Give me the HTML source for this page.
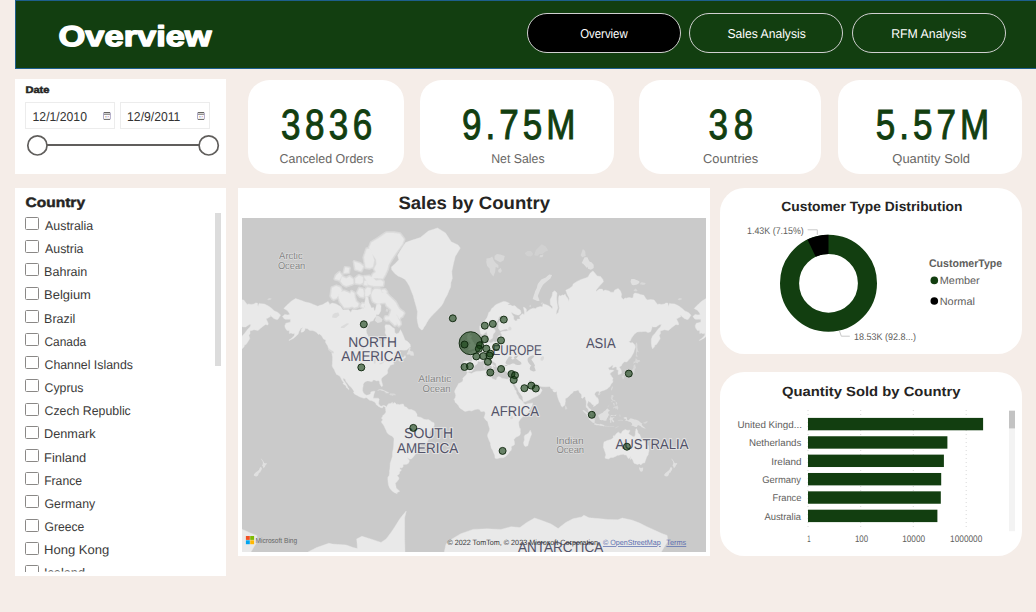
<!DOCTYPE html>
<html lang="en"><head><meta charset="utf-8"><title>Overview</title>
<style>
html,body{margin:0;padding:0}
body{width:1036px;height:612px;background:#F5EDE8;position:relative;overflow:hidden;font-family:"Liberation Sans",sans-serif}
.p{position:absolute;background:#fff}
.hdr{position:absolute;left:15px;top:0;width:1021px;height:69px;background:#123E10;box-sizing:border-box;border:1px solid #1d5f8c;border-right:none}
.pill{position:absolute;top:13px;height:39.5px;width:154px;box-sizing:border-box;border:1px solid #d0d0d0;border-radius:20px}
.inp{position:absolute;top:102px;height:27px;box-sizing:border-box;border:1px solid #ececec;background:#fff}
.cb{position:absolute;left:10px;width:13.6px;height:13.1px;box-sizing:border-box;border:1px solid #8a8886;border-radius:1.5px;background:#fff}
svg{position:absolute;left:0;top:0}
text{font-family:"Liberation Sans",sans-serif;text-rendering:geometricPrecision}
</style></head><body>

<div class="hdr"></div>
<div class="pill" style="left:527px;background:#000"></div>
<div class="pill" style="left:689px"></div>
<div class="pill" style="left:852px"></div>
<div class="p" style="left:15px;top:79px;width:211px;height:95px"></div>
<div class="inp" style="left:25px;width:90px"></div><div class="inp" style="left:120px;width:90px"></div>
<div class="p" style="left:248px;top:79.5px;width:156px;height:94.8px;border-radius:21.5px"></div>
<div class="p" style="left:420px;top:79.5px;width:194px;height:94.8px;border-radius:21.5px"></div>
<div class="p" style="left:639px;top:79.5px;width:182px;height:94.8px;border-radius:21.5px"></div>
<div class="p" style="left:838px;top:79.5px;width:184px;height:94.8px;border-radius:21.5px"></div>
<div class="p" id="country" style="left:15px;top:188px;width:211px;height:388px;overflow:hidden">
<div style="position:absolute;left:200px;top:25px;width:6px;height:153px;background:#dcdcdc"></div>
</div>
<div class="p" style="left:238px;top:188px;width:472px;height:368px"></div>
<div class="p" style="left:720px;top:188px;width:302px;height:166px;border-radius:24.5px"></div>
<div class="p" style="left:720px;top:372px;width:302px;height:184px;border-radius:24.5px"></div>
<div style="position:absolute;left:15px;top:188px;width:211px;height:383.5px;overflow:hidden">
<div class="cb" style="top:28.9px"></div>
<div class="cb" style="top:52.1px"></div>
<div class="cb" style="top:75.3px"></div>
<div class="cb" style="top:98.5px"></div>
<div class="cb" style="top:121.7px"></div>
<div class="cb" style="top:144.9px"></div>
<div class="cb" style="top:168.1px"></div>
<div class="cb" style="top:191.3px"></div>
<div class="cb" style="top:214.5px"></div>
<div class="cb" style="top:237.7px"></div>
<div class="cb" style="top:260.9px"></div>
<div class="cb" style="top:284.1px"></div>
<div class="cb" style="top:307.3px"></div>
<div class="cb" style="top:330.5px"></div>
<div class="cb" style="top:353.7px"></div>
<div class="cb" style="top:376.9px"></div>
</div>
<svg width="1036" height="612" viewBox="0 0 1036 612">
<text transform="translate(58.62 45.70) scale(1.2028 1)" font-size="28.6" font-weight="700" fill="#fff" stroke="#fff" stroke-width="1.4" stroke-linejoin="round">Overview</text>
<text transform="translate(580.19 38.00) scale(0.8902 1)" font-size="12.8" fill="#fff">Overview</text>
<text transform="translate(727.45 38.00) scale(0.9496 1)" font-size="12.8" fill="#fff">Sales Analysis</text>
<text transform="translate(891.22 38.00) scale(0.9613 1)" font-size="12.8" fill="#fff">RFM Analysis</text>
<text transform="translate(25.43 92.70) scale(1.1574 1)" font-size="9.6" font-weight="700" fill="#252423" stroke="#252423" stroke-width="0.5">Date</text>
<text transform="translate(32.58 120.90) scale(0.9478 1)" font-size="12.9" fill="#333">12/1/2010</text>
<text transform="translate(127.09 120.90) scale(0.9448 1)" font-size="12.9" fill="#333">12/9/2011</text>
<g fill="none" stroke-linecap="round"><path d="M104.2 112.5h5.5M103.9 114.2h6.1M104.2 119.4h5.5" stroke="#5f5d5b" stroke-width="0.95"/><path d="M103.5 113.1v5.7M110.4 113.1v5.7" stroke="#a7a1c2" stroke-width="0.9"/></g><rect x="104.9" y="116" width="0.9" height="1.5" fill="#e9b882"/><rect x="106.4" y="116" width="0.9" height="1.5" fill="#8db2ea"/><rect x="107.9" y="116" width="0.9" height="1.2" fill="#e6a6b6"/>
<g fill="none" stroke-linecap="round"><path d="M198.2 112.5h5.5M197.9 114.2h6.1M198.2 119.4h5.5" stroke="#5f5d5b" stroke-width="0.95"/><path d="M197.5 113.1v5.7M204.4 113.1v5.7" stroke="#a7a1c2" stroke-width="0.9"/></g><rect x="198.9" y="116" width="0.9" height="1.5" fill="#e9b882"/><rect x="200.4" y="116" width="0.9" height="1.5" fill="#8db2ea"/><rect x="201.9" y="116" width="0.9" height="1.2" fill="#e6a6b6"/>
<path d="M47 144.9H199" stroke="#605E5C" stroke-width="2" fill="none"/>
<circle cx="37.4" cy="145.4" r="9.6" fill="#fff" stroke="#605E5C" stroke-width="1.7"/>
<circle cx="208.7" cy="145.4" r="9.6" fill="#fff" stroke="#605E5C" stroke-width="1.7"/>
<text transform="translate(280.89 139.40) scale(0.8300 1)" font-size="42.2" letter-spacing="5.44" fill="#123E10" stroke="#123E10" stroke-width="1">3836</text>
<text transform="translate(461.92 139.40) scale(0.8300 1)" font-size="42.2" letter-spacing="4.88" fill="#123E10" stroke="#123E10" stroke-width="1">9.75M</text>
<text transform="translate(708.59 139.40) scale(0.8300 1)" font-size="42.2" letter-spacing="6.91" fill="#123E10" stroke="#123E10" stroke-width="1">38</text>
<text transform="translate(875.70 139.40) scale(0.8300 1)" font-size="42.2" letter-spacing="4.83" fill="#123E10" stroke="#123E10" stroke-width="1">5.57M</text>
<text transform="translate(279.58 163.00) scale(0.9645 1)" font-size="12.9" fill="#696765">Canceled Orders</text>
<text transform="translate(491.21 162.90) scale(0.9552 1)" font-size="12.9" fill="#696765">Net Sales</text>
<text transform="translate(703.06 162.90) scale(0.9979 1)" font-size="12.9" fill="#696765">Countries</text>
<text transform="translate(892.32 162.90) scale(1.0047 1)" font-size="12.9" fill="#696765">Quantity Sold</text>
<text transform="translate(25.48 206.80) scale(1.1427 1)" font-size="13.6" font-weight="700" fill="#252423" stroke="#252423" stroke-width="0.45">Country</text>
<clipPath id="cc"><rect x="15" y="188" width="211" height="383.5"/></clipPath><g clip-path="url(#cc)">
<text transform="translate(45.10 229.95) scale(0.9828 1)" font-size="12.6" fill="#3b3a39">Australia</text>
<text transform="translate(45.10 253.11) scale(0.9792 1)" font-size="12.6" fill="#3b3a39">Austria</text>
<text transform="translate(44.10 276.27) scale(0.9949 1)" font-size="12.6" fill="#3b3a39">Bahrain</text>
<text transform="translate(44.06 299.43) scale(1.0300 1)" font-size="12.6" fill="#3b3a39">Belgium</text>
<text transform="translate(44.10 322.59) scale(0.9874 1)" font-size="12.6" fill="#3b3a39">Brazil</text>
<text transform="translate(44.50 345.75) scale(0.9464 1)" font-size="12.6" fill="#3b3a39">Canada</text>
<text transform="translate(44.48 368.91) scale(0.9798 1)" font-size="12.6" fill="#3b3a39">Channel Islands</text>
<text transform="translate(44.48 392.07) scale(0.9784 1)" font-size="12.6" fill="#3b3a39">Cyprus</text>
<text transform="translate(44.48 415.23) scale(0.9784 1)" font-size="12.6" fill="#3b3a39">Czech Republic</text>
<text transform="translate(44.08 438.39) scale(1.0070 1)" font-size="12.6" fill="#3b3a39">Denmark</text>
<text transform="translate(44.07 461.55) scale(1.0194 1)" font-size="12.6" fill="#3b3a39">Finland</text>
<text transform="translate(44.13 484.71) scale(0.9670 1)" font-size="12.6" fill="#3b3a39">France</text>
<text transform="translate(44.48 507.87) scale(0.9788 1)" font-size="12.6" fill="#3b3a39">Germany</text>
<text transform="translate(44.49 531.03) scale(0.9643 1)" font-size="12.6" fill="#3b3a39">Greece</text>
<text transform="translate(44.06 554.19) scale(1.0353 1)" font-size="12.6" fill="#3b3a39">Hong Kong</text>
<text transform="translate(43.95 577.35) scale(1.0108 1)" font-size="12.6" fill="#3b3a39">Iceland</text>
</g>
<text transform="translate(398.39 208.60) scale(1.0309 1)" font-size="18" font-weight="700" fill="#252423">Sales by Country</text>
<defs><clipPath id="mc"><rect x="242" y="218" width="464" height="334"/></clipPath>
<filter id="soft" x="-5%" y="-5%" width="110%" height="110%"><feGaussianBlur stdDeviation="0.55"/></filter>
<g id="world" filter="url(#soft)"><path d="M403.9 313.3L402.2 316.4L400.5 317.2L399.3 319.3L397.6 315.8L396.5 314.4L398.2 318.5L400.1 321.7L400.5 324.2L398.8 325.9L395.9 321.4L397.1 324.2L394.8 325.2L391.9 322.2L389.1 319.6L386.2 320.1L384.9 318.8L385.6 316.6L389.1 316.6L390.2 313.6L391.4 310.0L389.6 307.9L386.8 305.7L385.6 302.7L383.9 302.7L381.1 303.0L377.7 303.4L375.4 302.7L373.1 301.4L372.0 298.6L371.4 294.9L372.5 291.1L374.8 289.1L377.1 289.1L380.5 289.5L382.2 293.0L385.1 292.6L387.4 294.2L389.6 296.8L392.5 299.3L395.3 302.0L397.1 305.3L398.8 308.5L401.0 310.6L403.3 312.1ZM381.7 289.9L385.1 289.5L386.8 292.2L384.5 293.4L382.2 292.2ZM338.9 297.9L340.1 301.7L342.3 304.7L344.3 307.6L348.6 307.6L352.0 306.6L354.3 307.6L357.7 306.6L358.6 303.7L356.0 301.4L354.9 297.9L354.1 293.0L351.5 291.5L350.3 293.8L348.0 292.6L344.0 291.1L340.1 292.6L338.6 295.3ZM330.9 296.0L332.6 298.6L333.8 299.3L336.6 297.9L339.5 293.8L341.8 290.7L340.3 287.4L336.1 286.1L332.1 287.8L331.5 292.2ZM340.6 281.3L342.9 284.4L346.3 286.1L350.9 284.4L353.2 283.5L353.2 279.4L349.7 276.5L346.3 278.5L341.8 276.5ZM334.9 278.9L339.5 280.3L341.8 275.5L339.5 272.5L336.1 275.5ZM357.1 293.0L360.0 296.4L363.4 297.1L364.0 293.0L362.9 289.1L359.4 288.2ZM365.1 296.0L368.0 296.0L370.8 293.4L370.8 288.2L367.4 287.4L365.1 289.9ZM360.6 306.3L362.9 307.6L365.1 307.3L364.6 304.0L362.3 303.4ZM355.4 283.1L360.0 284.0L362.9 282.6L362.9 277.0L358.9 275.5L355.4 278.5ZM364.0 284.8L367.4 285.3L367.4 281.3L364.6 280.8ZM364.0 276.5L368.6 284.8L373.7 286.1L379.4 286.1L382.8 285.7L383.4 281.7L380.5 279.9L376.0 280.8L372.5 277.5L369.1 276.0ZM371.4 278.0L377.1 278.0L382.8 278.5L385.1 274.5L387.4 269.3L388.5 264.7L390.8 260.5L394.2 255.3L397.6 250.4L402.2 244.3L403.9 239.3L399.9 233.9L394.2 232.9L386.2 232.9L378.2 238.4L371.4 242.6L369.1 248.1L373.1 255.3L376.0 259.2L376.5 264.1L374.2 268.7L376.0 271.9L373.1 274.0ZM365.7 267.6L369.7 268.1L372.8 267.0L374.2 260.5L370.8 248.9L366.8 248.9L364.0 257.3ZM355.4 269.3L361.1 270.9L363.4 266.5L360.0 263.5L354.3 261.7ZM344.0 273.0L348.6 272.5L349.2 268.1L345.2 267.6Z" fill="#e9e9e9" stroke="#e9e9e9" stroke-width="3.2" stroke-linejoin="round" opacity="0.5"/><path d="M282.5 316.4L284.8 314.4L287.6 315.0L289.9 314.4L288.8 312.4L287.0 310.3L283.8 308.5L285.9 306.3L288.2 304.0L291.6 301.0L295.6 298.6L300.7 300.3L305.3 302.0L309.8 303.0L313.3 304.4L317.8 306.3L320.1 305.3L322.4 304.7L325.8 302.7L328.1 301.4L329.8 304.4L332.1 303.0L336.1 304.0L340.6 306.6L342.9 310.0L348.6 309.7L350.9 312.4L352.0 309.7L357.7 310.0L362.3 308.8L364.0 308.5L364.6 303.7L365.7 296.4L368.0 297.5L369.1 303.0L370.3 305.3L371.4 307.9L373.7 307.6L374.2 310.9L375.4 310.0L376.5 304.7L379.4 303.7L381.1 305.7L380.7 310.9L378.8 314.4L376.0 314.7L376.0 316.6L374.2 318.5L373.1 320.7L370.3 321.4L368.6 324.5L366.8 328.1L366.2 330.4L366.6 333.1L368.6 336.9L372.5 337.3L376.0 339.6L378.2 340.4L380.2 340.8L380.3 343.9L381.1 346.4L382.2 348.0L383.6 347.7L384.2 345.6L383.7 342.0L386.2 339.0L386.8 335.9L385.1 333.1L385.5 329.7L384.9 326.2L385.6 324.7L389.6 324.9L392.5 327.4L394.4 328.5L394.8 332.6L396.5 333.9L398.8 333.1L400.5 329.7L402.2 333.1L403.5 336.3L405.0 340.0L407.9 341.8L410.2 344.5L410.5 346.8L409.0 347.9L406.7 349.9L403.9 350.2L401.0 349.9L398.2 350.0L395.9 352.1L394.2 354.5L393.1 355.7L394.8 354.2L397.1 352.3L399.9 351.8L400.7 352.8L398.8 353.9L400.1 355.2L400.4 356.7L401.6 357.4L403.5 357.4L405.0 355.5L405.7 357.2L404.1 358.5L401.6 359.6L399.1 361.2L398.5 359.8L400.2 358.2L398.8 358.5L397.4 359.3L395.3 360.4L393.6 361.5L393.4 363.1L394.2 364.0L392.5 364.5L390.0 365.4L389.5 367.0L388.2 368.6L387.4 370.8L387.7 372.8L386.8 374.2L385.1 375.3L383.6 376.4L381.7 378.1L381.2 380.0L382.1 382.9L382.7 385.7L381.9 386.7L380.7 385.6L379.7 383.4L379.6 381.8L378.2 380.5L376.8 380.9L374.6 380.1L373.1 380.1L372.2 381.6L370.8 381.6L369.1 381.0L367.1 380.9L365.8 381.4L364.0 382.7L363.1 384.4L363.2 385.8L362.6 388.2L362.5 390.4L363.2 392.4L364.4 394.1L366.3 395.3L369.1 394.8L370.6 393.7L370.9 391.9L373.7 391.2L375.0 391.5L374.2 393.4L373.7 395.2L373.3 397.3L373.0 398.2L376.0 398.2L378.2 398.2L379.2 399.1L378.8 401.5L378.6 403.8L379.4 404.9L380.5 406.1L381.7 406.3L383.0 405.5L385.1 405.8L385.9 406.6L385.8 407.4L384.9 406.9L383.4 406.2L382.5 407.0L382.5 407.9L381.1 407.7L379.6 407.0L378.6 406.6L377.3 405.2L376.2 404.7L376.0 403.4L374.2 401.7L373.1 401.2L371.4 400.6L369.7 400.3L368.8 399.6L366.8 397.8L365.5 397.8L364.0 398.3L361.7 397.6L360.1 397.0L357.7 395.7L355.8 394.7L354.3 393.8L353.5 392.6L354.0 391.3L352.7 389.2L350.9 387.0L349.3 385.7L348.0 383.8L347.5 383.1L346.1 381.8L345.2 379.2L343.2 378.1L343.2 379.9L344.6 381.8L345.8 383.6L347.1 385.7L347.9 387.6L349.2 389.2L348.6 389.6L347.9 388.6L346.3 387.5L346.0 385.7L344.0 384.4L342.9 383.4L343.7 382.5L342.1 380.5L341.1 378.5L340.4 377.1L339.0 375.4L336.6 374.5L335.0 371.5L334.4 369.8L332.9 367.6L332.2 366.0L332.4 363.5L332.5 360.4L332.6 356.9L331.8 353.2L333.8 353.3L333.6 351.8L331.7 350.4L328.6 348.6L327.7 345.8L325.5 342.4L325.8 340.0L323.5 339.0L321.8 335.9L319.5 333.9L318.4 334.4L316.7 332.6L314.7 331.3L312.7 330.4L309.8 330.4L307.6 328.8L305.3 328.3L304.7 330.4L303.0 332.0L300.9 332.2L301.5 329.2L303.0 327.6L300.7 328.5L299.0 331.5L298.1 334.2L295.6 336.5L293.3 338.4L291.0 339.6L289.0 340.6L289.3 339.8L291.0 338.8L293.0 336.9L294.3 335.5L294.7 333.3L292.7 333.7L291.0 333.1L289.3 333.5L289.3 330.4L287.0 330.4L285.3 328.1L284.8 325.7L285.9 323.2L288.2 322.7L290.5 321.9L290.5 319.3L288.2 319.3L285.4 319.3L284.2 318.8L282.5 316.4ZM403.9 313.3L402.2 316.4L400.5 317.2L399.3 319.3L397.6 315.8L396.5 314.4L398.2 318.5L400.1 321.7L400.5 324.2L398.8 325.9L395.9 321.4L397.1 324.2L394.8 325.2L391.9 322.2L389.1 319.6L386.2 320.1L384.9 318.8L385.6 316.6L389.1 316.6L390.2 313.6L391.4 310.0L389.6 307.9L386.8 305.7L385.6 302.7L383.9 302.7L381.1 303.0L377.7 303.4L375.4 302.7L373.1 301.4L372.0 298.6L371.4 294.9L372.5 291.1L374.8 289.1L377.1 289.1L380.5 289.5L382.2 293.0L385.1 292.6L387.4 294.2L389.6 296.8L392.5 299.3L395.3 302.0L397.1 305.3L398.8 308.5L401.0 310.6L403.3 312.1ZM381.7 289.9L385.1 289.5L386.8 292.2L384.5 293.4L382.2 292.2ZM338.9 297.9L340.1 301.7L342.3 304.7L344.3 307.6L348.6 307.6L352.0 306.6L354.3 307.6L357.7 306.6L358.6 303.7L356.0 301.4L354.9 297.9L354.1 293.0L351.5 291.5L350.3 293.8L348.0 292.6L344.0 291.1L340.1 292.6L338.6 295.3ZM330.9 296.0L332.6 298.6L333.8 299.3L336.6 297.9L339.5 293.8L341.8 290.7L340.3 287.4L336.1 286.1L332.1 287.8L331.5 292.2ZM340.6 281.3L342.9 284.4L346.3 286.1L350.9 284.4L353.2 283.5L353.2 279.4L349.7 276.5L346.3 278.5L341.8 276.5ZM334.9 278.9L339.5 280.3L341.8 275.5L339.5 272.5L336.1 275.5ZM357.1 293.0L360.0 296.4L363.4 297.1L364.0 293.0L362.9 289.1L359.4 288.2ZM365.1 296.0L368.0 296.0L370.8 293.4L370.8 288.2L367.4 287.4L365.1 289.9ZM360.6 306.3L362.9 307.6L365.1 307.3L364.6 304.0L362.3 303.4ZM355.4 283.1L360.0 284.0L362.9 282.6L362.9 277.0L358.9 275.5L355.4 278.5ZM364.0 284.8L367.4 285.3L367.4 281.3L364.6 280.8ZM364.0 276.5L368.6 284.8L373.7 286.1L379.4 286.1L382.8 285.7L383.4 281.7L380.5 279.9L376.0 280.8L372.5 277.5L369.1 276.0ZM371.4 278.0L377.1 278.0L382.8 278.5L385.1 274.5L387.4 269.3L388.5 264.7L390.8 260.5L394.2 255.3L397.6 250.4L402.2 244.3L403.9 239.3L399.9 233.9L394.2 232.9L386.2 232.9L378.2 238.4L371.4 242.6L369.1 248.1L373.1 255.3L376.0 259.2L376.5 264.1L374.2 268.7L376.0 271.9L373.1 274.0ZM365.7 267.6L369.7 268.1L372.8 267.0L374.2 260.5L370.8 248.9L366.8 248.9L364.0 257.3ZM355.4 269.3L361.1 270.9L363.4 266.5L360.0 263.5L354.3 261.7ZM344.0 273.0L348.6 272.5L349.2 268.1L345.2 267.6ZM421.6 329.9L418.9 327.4L417.7 322.7L417.0 318.0L417.5 311.8L416.4 307.3L415.1 302.7L413.2 295.7L411.3 291.1L409.6 286.6L407.3 282.6L405.1 279.4L401.6 277.5L398.0 276.0L394.8 273.5L391.7 269.8L391.4 267.0L394.8 264.1L398.8 259.8L397.6 255.3L401.0 249.6L405.6 242.6L412.4 240.1L420.4 237.5L428.4 231.0L437.5 228.0L445.5 232.9L451.2 241.8L458.0 245.0L460.3 248.1L455.2 256.6L453.5 263.5L451.8 271.4L452.3 278.5L450.9 282.6L450.6 287.0L448.9 290.7L447.2 294.9L444.9 298.9L443.2 303.0L441.5 305.7L439.2 308.2L435.8 311.8L432.0 315.5L429.0 319.1L426.9 322.4L425.6 324.9L423.8 327.6L422.9 329.5ZM385.9 406.6L386.4 407.3L387.1 405.8L387.9 404.4L388.7 403.7L390.8 403.4L392.3 402.2L392.7 402.9L392.3 404.0L394.0 403.3L394.2 402.4L395.7 403.3L396.5 404.4L397.6 404.2L399.9 404.8L401.0 404.2L403.3 404.1L403.7 405.2L404.7 406.7L406.7 407.3L407.7 408.6L409.0 409.5L411.3 409.5L414.1 410.7L415.3 411.5L417.0 414.3L417.0 416.4L418.7 417.0L420.4 417.2L423.3 418.7L423.8 419.3L426.7 419.7L428.4 419.6L430.1 420.6L431.8 421.9L433.9 422.7L434.3 424.5L434.2 425.5L433.3 427.5L431.8 429.0L430.1 431.3L429.5 433.7L429.5 436.7L428.7 439.1L428.1 440.0L427.3 442.1L426.1 443.4L424.8 443.4L423.0 443.7L421.2 444.6L419.1 446.5L418.6 448.4L418.1 450.6L417.0 452.3L415.9 453.6L414.6 455.2L413.1 457.2L411.3 458.9L409.9 458.9L407.4 457.7L408.8 459.7L409.4 461.0L408.4 463.3L406.7 464.3L403.1 464.6L403.1 467.0L401.3 468.0L399.9 467.4L399.9 469.3L401.5 470.0L399.6 471.9L399.3 474.0L397.1 475.6L398.8 477.6L398.9 478.9L397.1 481.5L395.3 483.3L396.0 486.6L396.1 487.9L399.7 491.2L398.2 492.0L396.5 493.0L397.3 493.8L394.2 492.4L391.9 490.8L389.6 487.9L388.5 485.1L387.9 480.7L387.9 477.3L389.1 475.6L389.6 472.4L389.4 470.8L389.9 468.9L390.0 466.2L390.2 463.3L390.6 461.9L391.4 459.7L392.4 456.3L392.5 453.6L392.6 452.1L393.2 449.0L393.6 446.4L393.7 444.1L394.0 439.9L393.9 437.9L392.6 436.8L391.4 435.7L389.6 434.9L388.3 434.1L387.0 432.5L386.1 430.2L385.1 428.2L384.2 426.1L383.1 424.4L382.1 423.3L381.3 421.8L382.2 420.4L382.9 419.4L381.8 419.0L381.8 417.5L382.7 416.4L382.8 415.5L384.1 414.8L384.2 414.3L385.1 413.4L386.0 412.1L385.6 410.1L385.8 409.0L385.2 408.2L385.8 407.4ZM467.3 372.6L468.0 372.5L470.6 373.3L471.7 373.6L473.3 372.6L475.1 371.8L477.4 371.2L479.7 371.2L482.0 370.9L485.2 370.5L486.5 370.9L486.0 371.8L486.1 372.6L486.5 373.8L485.5 375.3L486.7 376.2L489.0 376.6L491.3 377.3L492.2 378.8L493.9 379.3L495.7 380.1L496.8 379.2L496.8 377.7L498.6 376.6L500.2 377.1L501.4 377.9L502.5 378.4L504.8 378.8L507.1 379.3L508.2 378.8L509.3 378.5L510.5 378.8L510.9 378.9L511.1 380.5L511.2 381.2L511.8 382.7L512.5 384.2L513.3 386.3L514.5 388.2L514.6 389.4L516.1 390.7L516.4 393.6L517.9 395.5L519.0 398.4L520.7 399.7L522.7 401.5L523.4 402.0L523.2 403.1L525.3 404.5L527.6 403.7L529.9 403.4L532.5 402.9L532.4 404.5L531.9 406.1L530.8 407.8L529.3 410.7L528.1 412.4L525.6 414.1L523.6 415.8L522.5 416.9L521.3 418.3L520.2 419.3L519.3 421.0L518.7 422.1L518.8 424.2L519.0 426.1L519.6 427.9L520.3 428.7L520.3 431.3L520.5 433.1L519.9 434.9L518.5 436.0L516.2 437.1L514.8 438.5L513.8 439.4L514.2 440.9L514.5 442.7L514.5 444.6L513.3 445.6L511.6 446.2L511.2 447.1L511.5 448.4L511.1 450.3L509.3 452.1L508.2 454.0L505.9 456.3L503.3 457.7L500.8 457.8L499.1 458.1L496.8 458.8L495.0 458.1L494.9 456.7L494.7 454.9L493.7 452.9L492.8 450.4L491.3 447.9L490.5 444.6L490.5 443.2L489.4 440.9L488.2 437.9L487.5 436.1L487.8 433.9L489.3 430.9L489.7 428.8L489.0 426.5L488.0 423.4L487.9 422.1L487.5 421.6L486.5 420.7L485.2 419.3L484.0 417.2L484.7 415.9L484.9 415.0L485.2 413.8L485.1 412.8L484.8 411.8L483.7 411.2L482.0 411.4L480.8 411.5L479.9 410.1L479.0 409.2L477.9 409.1L476.7 409.2L475.4 409.4L473.8 410.1L471.6 411.0L469.4 410.5L467.2 410.9L465.2 411.4L463.7 410.7L461.7 409.2L459.8 407.9L459.0 406.7L458.4 405.5L456.9 403.8L455.8 402.7L455.0 402.2L455.0 400.9L454.1 399.5L455.2 397.9L455.8 395.4L455.4 393.7L454.6 392.1L454.8 390.7L455.9 388.6L457.5 385.7L458.6 383.5L459.3 383.3L461.3 382.2L462.6 381.2L463.1 380.0L462.8 378.5L463.5 377.5L465.3 375.7L466.2 375.1L466.9 373.5ZM530.2 430.2L531.2 432.5L531.6 434.3L530.5 436.7L529.9 438.5L528.7 442.1L527.8 445.7L525.5 446.5L524.2 445.6L523.5 442.7L524.5 439.7L524.2 436.7L525.1 435.1L526.4 434.6L528.1 433.5L529.3 431.9ZM467.8 372.2L466.8 371.7L466.0 370.7L463.7 370.9L464.0 369.5L463.2 368.5L463.9 366.6L464.1 364.8L463.4 362.0L464.4 361.4L466.0 360.9L467.5 361.1L469.7 361.2L470.6 361.4L471.9 361.4L472.5 359.3L472.7 357.9L472.6 356.9L471.5 355.5L470.6 354.5L469.0 354.2L468.5 353.2L470.0 352.5L471.7 352.8L472.2 352.7L471.9 350.9L472.6 351.3L474.1 351.3L475.1 350.6L475.8 349.1L476.2 348.6L477.3 348.0L478.0 347.7L478.6 346.8L479.4 344.9L480.3 344.3L482.0 343.9L483.1 343.7L484.1 343.0L483.9 341.4L483.3 340.0L483.2 338.0L483.8 336.7L486.1 335.5L486.0 336.9L485.7 338.8L485.2 340.0L484.8 341.0L485.3 341.4L485.6 342.2L486.4 343.0L487.7 342.6L489.4 341.8L490.3 343.2L492.2 342.4L493.4 341.4L495.2 342.2L496.3 342.2L496.8 341.2L497.9 340.4L498.1 339.6L497.9 337.3L498.5 335.9L499.8 335.5L500.4 336.9L501.5 336.9L501.8 334.2L500.8 333.3L500.8 332.2L502.2 331.5L503.6 331.3L505.9 331.3L508.4 330.6L506.7 329.0L504.8 329.2L502.5 329.9L500.2 330.8L499.1 329.5L498.3 328.1L498.5 325.7L498.3 323.0L500.2 320.7L503.0 318.0L501.9 315.8L499.3 316.4L498.5 318.0L497.9 320.1L497.1 321.4L495.3 323.2L494.3 324.9L493.7 326.9L493.6 328.8L495.1 329.7L495.2 332.0L493.9 333.3L493.0 334.8L492.8 336.9L492.6 337.8L492.0 338.8L490.5 339.0L490.2 340.2L488.8 340.2L488.6 339.0L488.2 337.6L487.6 335.5L486.8 332.8L486.2 331.1L485.7 332.6L484.8 333.1L483.1 334.6L482.0 334.8L480.5 333.3L480.4 332.6L479.8 329.5L479.7 326.9L480.0 325.4L481.1 324.5L482.6 322.7L484.3 321.4L485.4 320.1L486.9 318.0L488.0 315.3L488.8 312.4L490.3 311.5L491.7 308.5L493.4 307.3L495.4 305.0L497.9 303.7L501.0 302.4L503.4 301.4L505.9 301.7L508.2 302.7L509.5 303.4L507.6 304.4L508.8 305.0L510.5 305.0L512.2 306.0L515.0 305.7L517.3 308.2L520.2 310.0L521.1 312.4L520.7 313.8L519.0 315.0L517.3 315.0L513.9 313.8L511.1 312.1L512.2 314.4L513.7 316.6L513.7 319.3L515.6 320.9L517.1 320.7L517.3 319.1L519.6 319.1L520.2 319.1L519.6 316.6L521.3 314.7L522.5 313.8L524.2 314.7L524.5 312.4L523.9 309.4L523.4 307.3L525.3 307.9L526.4 309.4L526.4 312.4L528.7 310.6L529.9 309.4L533.3 308.2L535.6 308.8L536.7 307.6L540.1 306.6L542.4 306.9L543.0 303.7L547.5 305.3L550.4 306.9L552.1 308.8L552.7 306.9L550.4 304.4L550.2 299.6L552.1 296.0L552.7 292.2L554.9 291.1L557.0 293.0L556.6 297.9L557.0 303.0L557.8 307.9L556.6 310.9L556.1 314.4L558.4 312.4L559.3 307.9L558.4 303.0L558.7 296.8L559.5 295.3L560.6 296.0L562.4 294.9L563.5 295.3L565.2 294.2L565.8 296.0L567.5 297.9L569.0 301.4L569.2 297.9L567.5 294.9L565.8 290.3L569.8 288.2L572.6 286.1L573.2 284.0L576.6 281.7L581.2 279.4L585.7 278.0L588.0 277.0L590.3 273.0L592.9 270.9L594.8 273.0L597.1 276.0L600.5 276.5L602.8 279.4L603.4 281.7L599.4 286.1L596.0 290.3L596.0 291.5L599.4 289.1L602.2 289.1L603.4 291.1L605.1 289.9L609.1 291.1L610.8 292.2L613.6 292.2L614.8 289.9L618.2 288.6L620.5 291.1L621.6 294.2L621.1 297.1L623.3 299.6L625.0 297.9L626.2 298.2L629.0 297.5L631.3 297.9L633.0 297.9L633.6 294.2L634.7 293.0L637.6 293.4L640.4 294.5L643.9 295.3L645.6 298.2L647.3 300.0L650.7 299.6L654.1 300.0L656.4 303.0L657.5 304.4L659.2 304.0L661.5 304.4L664.4 304.0L665.9 303.0L667.8 303.0L668.4 306.6L669.5 303.4L671.2 303.7L674.6 304.0L676.9 305.0L679.2 306.3L681.5 307.9L684.9 310.9L688.3 312.4L690.6 314.7L690.9 315.3L688.3 319.3L687.0 319.6L684.3 318.5L682.0 316.6L680.3 314.7L680.9 316.6L676.9 318.8L676.4 318.8L678.6 323.2L678.4 324.9L675.8 324.5L673.5 326.2L671.2 328.1L668.4 330.4L664.4 329.7L662.1 330.4L660.4 330.8L660.4 333.7L659.2 335.2L660.2 338.6L658.7 341.0L658.1 342.0L656.4 344.5L654.9 344.9L654.5 346.8L652.6 348.8L651.8 346.8L651.3 343.0L651.4 339.0L652.6 335.9L654.7 333.7L656.4 331.5L658.1 329.2L660.4 326.9L661.5 324.5L659.8 324.5L657.0 326.2L656.4 326.9L653.0 326.9L652.4 326.2L650.7 331.7L647.9 332.6L645.9 331.5L643.9 331.5L641.6 331.7L639.9 331.7L637.2 332.0L634.7 333.7L633.0 335.9L631.5 338.0L630.2 341.0L628.5 341.6L630.8 343.0L632.5 342.6L634.4 344.5L635.1 345.8L635.2 347.7L634.2 350.4L633.9 352.1L632.5 354.7L630.8 357.5L629.0 359.6L626.8 362.0L624.5 361.8L623.3 362.8L623.0 363.1L621.9 364.5L621.6 365.5L619.9 366.6L619.4 367.6L620.4 368.8L621.3 370.5L621.6 372.4L621.4 373.3L621.1 373.6L619.6 374.2L618.1 374.6L618.1 373.1L618.2 371.4L618.3 370.1L617.1 369.8L616.5 369.2L616.8 368.3L616.7 367.3L615.8 366.7L614.2 367.2L612.6 368.2L612.5 367.0L613.3 365.8L612.2 365.2L610.6 366.7L608.5 367.8L608.3 368.2L609.1 369.5L609.7 370.5L609.9 369.9L611.4 370.1L612.4 370.1L613.8 370.4L613.5 371.1L611.3 372.2L610.0 373.8L610.0 374.2L611.1 375.4L611.8 377.1L612.9 378.0L613.0 379.2L611.9 380.1L613.1 380.7L612.6 382.5L611.9 383.1L610.8 384.7L610.3 385.7L609.7 386.7L608.6 387.6L607.4 388.8L607.0 389.1L605.1 389.8L604.2 390.3L603.4 390.4L601.7 391.0L600.0 391.7L599.7 392.8L599.2 392.8L599.2 391.4L598.3 391.3L597.1 391.2L595.8 392.1L594.8 393.4L594.5 394.3L595.4 395.8L596.5 397.2L597.5 397.8L598.3 399.3L598.6 401.5L598.5 402.9L597.5 403.9L596.0 404.5L595.5 405.5L593.5 406.6L593.7 405.2L593.1 404.5L592.1 404.4L591.4 403.5L590.9 402.6L589.1 401.8L588.7 400.9L588.0 401.1L588.0 402.6L587.2 403.8L587.1 405.2L587.4 405.9L588.2 406.8L588.7 408.2L589.7 408.6L590.6 409.3L591.6 410.3L592.0 411.5L591.9 412.1L592.1 413.3L592.8 414.3L592.6 414.9L592.0 414.9L590.9 414.0L589.5 413.1L588.8 411.8L588.3 410.2L588.2 409.1L587.5 408.4L586.6 407.3L586.1 407.4L586.1 406.1L586.4 404.9L586.3 403.2L586.4 402.0L585.9 400.3L585.4 398.7L585.3 397.3L584.4 396.7L583.7 397.3L582.6 398.3L581.5 397.9L581.7 396.1L581.5 394.6L580.7 393.4L579.9 393.0L579.2 392.1L578.7 390.3L577.2 390.3L575.5 390.9L574.3 391.0L573.2 391.4L573.0 392.3L572.5 393.1L571.8 393.4L570.9 394.0L569.8 395.2L569.0 395.9L567.8 397.2L566.6 398.0L565.4 398.5L565.3 400.3L565.5 401.3L565.1 402.6L565.0 404.6L564.1 405.8L563.1 406.2L562.4 407.1L561.2 406.1L560.9 404.9L560.3 403.2L559.3 401.6L558.6 399.7L558.1 398.5L557.6 396.7L557.0 394.3L556.9 392.5L557.0 391.7L556.6 390.7L556.3 391.9L554.9 392.1L553.8 391.9L552.7 390.4L554.1 389.6L552.7 389.6L552.1 388.8L551.0 388.5L550.3 387.2L549.8 386.4L547.5 386.7L544.7 386.8L544.1 386.8L541.3 386.4L539.5 386.1L539.0 384.7L538.2 384.2L536.1 384.9L534.4 384.4L532.7 383.3L531.9 382.0L531.2 380.5L529.9 380.0L529.3 380.5L528.7 381.3L529.3 382.5L529.9 383.8L531.0 384.8L531.2 385.2L531.3 386.3L531.9 387.2L532.1 385.6L532.5 385.6L532.8 387.0L532.7 387.6L533.9 388.0L536.0 387.6L537.0 386.6L538.0 385.6L538.3 385.2L538.3 387.0L538.5 387.6L540.8 388.7L542.2 390.1L541.0 392.3L539.9 394.3L539.0 394.6L537.8 395.7L535.6 396.7L533.5 397.7L531.0 399.1L529.9 399.7L527.6 400.7L525.3 401.7L523.6 401.8L523.2 401.1L522.8 399.3L522.7 397.3L522.5 396.7L521.3 394.9L520.2 393.4L519.0 391.9L518.6 391.3L517.9 389.4L517.3 388.1L516.4 387.0L515.6 385.7L514.5 383.8L513.7 383.1L513.9 381.2L513.1 383.5L511.8 382.1L511.2 380.7L510.9 378.9L513.0 378.8L513.7 377.7L513.9 376.8L514.5 375.3L514.8 374.5L514.8 373.1L515.3 371.5L514.5 371.5L513.4 371.2L512.4 372.1L511.4 372.4L509.0 371.1L508.8 371.9L507.3 371.9L506.1 371.2L505.1 370.9L505.0 369.9L504.6 368.9L504.2 367.6L503.9 366.6L503.6 365.7L503.5 365.4L501.8 365.2L501.4 366.4L500.8 366.6L500.1 365.8L499.8 366.6L500.2 367.6L500.8 368.3L501.4 369.9L500.8 369.6L500.2 369.6L500.4 370.5L500.2 371.7L499.6 371.7L498.7 371.2L498.3 369.9L498.7 369.2L497.9 369.1L497.7 368.0L497.0 367.3L496.2 366.1L496.1 364.6L496.1 363.7L495.3 363.1L494.6 362.6L492.7 361.2L491.3 360.3L491.0 358.8L490.4 358.3L489.8 359.2L489.5 358.0L489.7 357.9L488.0 358.2L488.2 359.0L488.4 360.4L489.4 361.1L490.2 362.8L492.5 363.7L492.2 364.5L493.3 364.9L494.5 365.7L495.1 366.4L495.0 366.9L493.6 365.8L492.9 366.6L492.9 367.0L493.5 368.0L492.8 368.9L492.2 369.6L491.8 369.4L492.1 368.5L492.4 367.3L491.8 366.6L490.9 365.7L490.2 365.4L489.4 364.8L487.9 363.9L487.5 363.4L486.5 362.8L486.0 362.0L485.7 361.2L485.2 360.3L484.1 359.8L483.3 360.4L482.3 360.9L480.8 361.8L480.2 361.5L479.2 361.4L478.4 361.2L477.5 362.0L477.5 362.8L477.8 363.1L476.5 364.5L475.4 364.9L474.9 365.5L473.7 367.3L474.2 368.5L473.4 369.1L473.0 370.1L471.5 371.4L469.0 371.4ZM467.5 350.2L468.9 349.9L469.9 350.0L471.7 349.3L472.9 349.1L474.2 349.1L475.6 348.4L475.6 347.9L474.8 347.7L475.5 347.1L475.9 345.6L475.5 345.1L474.3 345.1L474.3 343.9L474.0 343.7L473.9 342.8L472.6 341.8L472.4 341.0L472.2 339.8L471.5 339.2L470.4 339.0L471.0 338.4L470.8 338.0L471.7 336.7L471.9 335.7L470.0 335.5L469.2 335.9L469.4 335.0L470.5 333.5L468.3 333.5L468.0 334.8L467.4 335.9L467.5 337.3L466.9 337.6L467.6 338.6L467.5 340.4L468.3 339.4L468.5 339.8L468.2 341.2L468.4 341.6L470.0 341.2L469.9 342.0L470.4 342.8L470.7 343.4L470.5 344.1L469.1 344.1L468.8 344.3L468.6 345.3L469.3 345.8L468.6 346.6L468.0 346.9L468.2 347.5L469.4 347.5L470.4 347.9L470.9 347.5L470.5 348.2L469.2 348.2L468.9 348.6L468.2 349.7ZM636.5 428.7L637.6 430.8L637.9 432.9L639.6 434.3L640.2 436.0L641.4 438.7L643.3 439.9L644.1 441.0L645.9 443.1L647.1 444.6L647.9 445.6L648.6 445.8L648.6 448.9L649.1 450.6L648.4 452.9L648.2 454.7L647.1 456.2L646.5 457.5L645.9 459.3L645.0 461.6L645.0 462.6L642.7 463.2L641.6 464.0L640.9 464.9L639.3 463.7L637.6 464.5L635.3 463.7L634.2 463.3L633.3 461.6L632.8 460.0L631.9 459.0L631.3 457.9L630.8 459.3L630.1 459.3L631.1 455.7L630.2 457.2L629.0 458.5L628.1 458.3L627.0 456.3L626.4 455.1L624.5 454.9L623.3 454.3L621.1 454.5L618.8 455.2L617.6 455.3L615.9 456.3L613.0 457.5L610.8 457.5L608.4 459.0L605.2 458.2L605.1 457.0L605.9 454.9L605.4 452.9L604.6 450.7L604.1 449.0L603.4 447.4L603.5 445.7L603.7 443.4L604.1 441.9L605.2 441.6L607.2 440.5L609.2 440.0L610.8 439.6L612.5 438.5L613.3 437.3L613.3 436.1L614.1 435.4L614.9 436.5L615.1 435.2L615.9 434.3L616.8 433.2L617.9 432.5L618.7 432.2L619.7 433.1L620.1 433.7L621.1 433.6L621.7 432.5L622.4 431.2L623.1 430.6L623.9 430.4L625.2 429.5L626.2 429.9L627.9 430.4L629.8 430.2L629.6 431.6L628.9 432.8L628.4 433.7L630.0 434.8L631.3 435.6L633.0 436.7L634.5 436.7L635.2 434.9L635.4 433.1L635.4 431.3L635.7 430.9L635.9 429.0ZM444.3 560.0L444.3 552.0L446.0 544.1L452.1 538.9L460.8 533.7L473.0 529.4L486.9 528.8L500.8 529.4L511.2 526.7L519.9 527.6L526.8 522.4L534.6 518.1L542.5 520.7L551.1 524.1L558.1 528.5L565.8 522.4L573.0 518.8L581.7 516.9L583.9 515.2L589.0 517.8L600.5 518.8L607.8 519.5L617.9 519.8L622.3 518.1L632.4 520.2L639.6 523.1L646.9 526.7L654.1 529.9L661.3 533.3L667.1 535.4L667.9 541.2L664.2 547.0L661.3 552.0L661.0 560.0ZM308.0 560.0L308.0 552.0L316.7 547.6L328.9 543.3L332.3 544.1L346.2 545.0L353.2 547.6L357.5 548.5L356.7 538.9L361.9 536.3L370.6 538.9L381.0 542.4L386.2 538.9L391.4 532.0L394.9 526.7L399.2 519.8L401.8 516.3L406.2 511.1L404.6 518.1L404.6 526.7L404.6 537.2L405.0 552.0L405.0 560.0Z" fill="#e9e9e9" stroke="#e9e9e9" stroke-width="0.4" stroke-linejoin="round"/><path d="M374.8 320.7L377.7 323.0L381.7 321.9L382.5 319.3L379.4 316.4L376.5 315.3ZM447.9 317.0L449.5 315.1L451.2 316.8L452.8 315.8L454.8 314.9L456.1 316.0L456.9 318.0L455.6 319.6L452.8 321.2L450.7 320.4L449.4 320.4L449.9 319.0L448.4 318.2L449.9 317.4ZM406.4 354.5L407.4 352.8L408.2 350.4L409.2 348.0L410.7 347.5L410.0 350.4L411.3 351.3L413.0 351.6L413.6 353.0L413.9 354.7L413.4 356.0L412.4 355.5L410.7 355.7L410.2 354.5L407.9 354.5ZM377.1 390.8L378.2 389.8L380.1 389.2L382.2 389.4L383.9 390.2L385.6 390.9L387.4 391.7L389.4 392.9L387.9 393.2L385.4 393.2L386.1 392.4L384.7 392.3L384.5 391.3L382.8 390.9L381.1 390.6L379.9 389.9L378.8 390.4ZM466.7 346.4L466.9 344.9L467.0 344.3L466.9 343.0L467.7 342.2L467.5 341.6L467.0 340.6L465.6 340.2L464.5 340.8L464.3 341.8L464.7 342.0L462.6 342.6L462.6 343.9L463.7 344.5L463.2 345.1L462.7 345.6L462.1 346.6L462.4 347.3L462.8 347.9L464.5 347.1L466.0 346.6ZM532.7 298.9L533.6 296.0L534.4 293.8L535.2 291.1L536.7 288.2L537.8 284.0L539.5 281.7L541.3 279.4L545.8 277.5L549.2 274.5L552.1 275.0L550.4 278.5L545.8 282.2L543.0 284.8L541.3 287.8L540.1 290.3L538.8 293.4L537.8 296.0L539.0 298.9L539.5 301.0L537.3 301.0L535.0 300.0ZM581.7 262.9L584.6 257.3L587.4 257.3L589.1 261.1L591.4 262.9L588.6 265.3L586.9 268.1L583.4 264.1ZM587.4 264.7L590.9 261.7L593.7 264.7L593.7 268.1L590.9 269.8L588.0 268.7ZM630.5 281.7L631.3 278.9L634.2 278.9L637.0 280.3L639.3 281.3L639.3 283.1L637.0 284.4L633.6 285.3L631.9 284.8ZM598.3 414.7L599.7 414.5L600.9 413.5L602.8 412.8L604.0 411.3L605.1 410.7L606.2 409.5L607.2 408.4L608.2 409.1L608.6 409.8L609.9 410.5L608.9 411.4L608.4 411.6L608.1 412.6L608.5 413.9L609.7 415.3L608.3 415.5L608.0 417.0L607.2 417.9L606.6 419.3L606.5 420.4L605.7 420.7L604.6 420.4L604.5 421.1L602.8 420.0L601.5 420.3L599.7 419.7L599.4 418.1L598.5 416.5L598.3 415.4ZM582.6 410.0L584.6 410.5L585.7 411.5L586.5 412.1L588.0 413.4L589.1 414.1L590.5 415.3L591.8 415.8L592.3 417.5L593.1 418.5L594.8 419.8L594.7 421.3L594.7 423.0L594.0 422.8L593.1 423.1L592.0 422.1L590.6 420.7L589.1 419.4L588.5 417.5L587.1 416.1L586.5 414.5L585.4 413.5L584.0 412.2L582.9 410.9ZM593.9 424.2L594.8 423.1L595.8 423.4L597.7 423.9L600.0 424.3L600.5 423.7L602.5 424.6L604.4 425.3L604.4 426.4L602.8 425.9L600.5 425.8L598.3 425.2L596.5 425.2L595.3 424.7ZM610.5 415.5L611.8 414.9L614.2 415.4L616.5 414.6L615.7 415.9L613.1 415.8L611.1 415.9L610.8 417.3L612.5 417.4L614.6 417.3L614.7 417.5L613.1 418.3L612.5 419.3L613.4 420.2L614.2 421.5L613.8 422.6L612.6 421.8L611.9 420.4L611.8 419.5L611.3 420.4L611.3 422.7L610.2 422.8L610.1 422.2L610.2 420.4L609.4 419.6L609.9 418.1L610.6 417.0ZM623.2 417.9L625.0 416.9L626.8 417.3L627.0 418.7L627.4 420.2L628.5 420.2L630.2 418.5L631.9 418.5L634.4 419.4L635.3 419.5L637.6 420.3L638.7 420.7L640.2 422.3L641.6 423.3L642.5 424.1L641.6 424.2L642.7 426.1L643.9 426.9L645.6 428.2L645.9 428.6L643.9 428.2L641.8 427.3L640.4 426.1L638.7 425.2L638.2 425.2L637.0 426.1L637.2 426.9L635.9 426.9L634.7 426.8L633.0 425.7L631.3 425.9L632.2 424.4L631.9 423.3L630.8 422.3L628.5 421.4L626.8 420.8L625.6 421.0L625.4 420.2L626.2 419.3L624.8 419.0L623.6 418.1ZM639.0 467.3L641.0 467.9L643.1 467.6L643.1 469.3L642.7 471.1L641.6 471.7L640.4 471.6L639.6 470.0L639.1 468.5ZM671.1 458.3L672.7 459.7L673.7 461.3L674.6 462.9L676.0 463.3L677.3 463.0L676.7 464.5L675.8 465.5L675.2 467.0L673.8 468.3L673.5 467.0L673.0 465.9L672.4 465.2L673.2 464.3L673.3 462.6L672.8 461.1L671.7 459.5ZM671.0 467.1L672.4 468.0L671.9 469.9L670.9 471.4L670.8 472.2L669.3 473.0L668.8 474.5L668.4 475.6L667.0 476.4L665.5 476.3L664.2 475.4L664.4 474.3L665.5 473.0L666.7 472.1L668.1 471.0L669.3 469.9L670.1 468.3L670.4 467.4Z" fill="#e9e9e9" fill-opacity="0.72"/><path d="M333.3 353.2L331.5 352.7L329.4 350.9L327.7 349.3L328.6 348.8L330.9 350.0L332.6 351.6ZM385.6 311.5L387.9 311.8L388.5 309.4L386.2 308.5ZM389.2 395.1L390.3 393.2L392.3 393.4L394.2 393.5L396.0 394.7L395.7 395.3L393.6 395.2L392.5 395.9L391.4 395.3ZM486.5 339.6L488.2 338.8L488.4 340.2L487.5 341.6L486.7 340.6ZM483.8 362.9L484.7 362.0L484.8 363.5L484.5 364.5L483.9 364.0ZM483.3 365.2L484.5 364.8L485.2 365.8L484.9 367.8L484.1 368.2L483.6 367.8ZM488.1 369.5L489.4 369.2L491.8 369.1L491.3 370.7L491.2 371.4L490.0 370.8L488.4 370.1ZM500.8 372.9L501.9 373.1L504.0 373.3L503.9 373.8L502.2 373.8L500.8 373.3ZM510.8 373.6L511.6 373.2L513.4 372.8L512.8 373.8L511.6 374.3L510.9 374.0ZM500.2 368.0L501.6 368.6L502.0 369.5L501.1 368.9ZM486.3 262.3L486.5 258.6L490.0 257.9L492.2 256.6L493.9 260.5L495.7 262.9L498.5 265.3L498.3 268.1L495.7 267.0L495.1 271.9L493.4 276.5L491.7 274.5L490.0 271.9L489.7 268.7L487.1 265.9ZM494.5 255.9L496.8 253.9L500.2 254.6L504.8 255.9L503.6 260.5L500.2 262.3L496.8 260.5L494.7 259.2ZM498.2 269.8L500.8 268.1L501.9 270.9L500.2 273.0L498.3 271.9ZM539.5 257.3L542.4 257.3L543.5 254.6L540.1 255.3ZM540.7 303.7L542.4 301.7L542.7 303.4L541.8 304.4ZM529.1 306.0L530.4 304.7L531.3 306.0L530.2 307.3ZM553.2 291.1L554.9 290.3L555.7 291.9L554.1 292.6ZM580.6 255.3L582.9 248.9L585.1 251.1L585.7 255.9L582.3 257.3ZM640.2 283.1L641.6 282.2L643.3 282.6L642.1 284.4L640.4 284.4ZM641.6 283.5L643.9 282.6L645.9 283.5L644.4 284.8L641.8 284.8ZM633.4 290.7L635.3 288.6L637.6 290.3L636.5 291.5L634.2 291.1ZM677.5 299.3L679.8 297.9L682.0 298.6L681.5 299.6L679.2 300.3ZM636.7 342.2L637.4 344.9L637.4 347.7L637.9 350.4L639.0 352.3L637.0 351.8L636.6 354.7L637.6 355.9L637.5 357.0L636.5 356.2L635.9 357.2L635.9 354.7L636.0 352.1L636.0 349.5L635.7 347.3L635.5 344.3ZM635.8 358.0L637.6 360.0L639.6 360.0L640.2 361.4L638.6 362.0L637.4 363.5L635.7 362.6L634.7 363.1L633.9 363.1L633.7 364.5L633.4 362.6L633.9 361.5L635.2 361.5L635.5 359.6ZM635.2 364.5L635.3 365.8L635.9 367.3L635.3 369.1L634.7 369.2L634.7 370.9L634.3 371.9L634.6 372.8L633.6 373.9L633.4 373.1L632.3 374.3L631.5 374.3L630.2 374.3L630.1 374.7L628.8 376.0L628.0 375.1L628.2 374.3L626.8 374.3L625.6 374.7L624.9 374.7L623.3 375.1L623.6 374.3L625.0 373.2L625.8 372.9L627.3 372.9L628.5 372.9L629.0 372.8L629.8 371.2L630.5 370.2L630.2 370.9L630.4 371.2L631.9 370.4L632.5 369.5L633.4 368.0L633.4 366.7L633.6 365.7L633.9 364.8L634.7 364.8ZM623.2 375.3L624.1 375.7L624.5 376.8L623.8 378.7L623.0 379.2L622.4 378.8L622.4 377.6L621.9 376.9L621.7 376.1L622.7 375.7ZM625.0 375.1L627.0 374.6L627.6 375.4L627.0 376.1L625.6 376.8L624.9 376.1ZM612.5 386.6L613.1 387.0L612.4 388.8L611.8 390.7L611.0 389.7L610.9 388.8L611.6 387.6L611.9 386.8ZM597.9 394.1L598.8 393.1L600.2 393.0L600.5 393.6L599.9 394.7L598.8 395.3L597.9 394.9ZM611.5 394.9L613.3 394.9L613.5 396.7L612.5 397.9L612.7 399.1L613.6 399.9L615.4 400.5L615.5 401.9L614.6 401.2L613.6 400.7L612.5 400.5L611.5 400.0L611.8 399.7L611.1 399.3L610.7 397.6L611.3 397.2L611.3 396.1ZM617.1 405.2L618.1 406.7L618.3 408.1L617.9 409.2L617.1 410.0L617.0 408.6L615.6 409.3L615.4 408.2L614.6 407.8L613.1 408.5L613.3 407.3L614.8 406.4L616.2 406.2ZM615.7 402.0L616.8 401.9L617.3 403.5L616.7 404.7L616.3 404.8L615.8 403.4ZM613.1 402.9L614.3 403.1L614.8 404.4L614.4 405.9L613.6 405.3L613.8 404.4L613.0 404.2ZM611.3 400.9L612.2 401.0L612.5 402.2L611.7 402.3ZM607.6 406.8L608.5 405.8L610.0 404.2L610.2 403.4L609.7 404.5L608.7 406.1L607.8 406.9ZM594.0 418.3L595.1 418.2L595.6 419.4L594.8 419.8ZM604.5 425.8L605.9 425.8L607.0 425.9L606.8 426.6L605.3 426.5ZM607.2 426.1L609.7 425.9L611.9 426.0L614.2 425.9L614.0 426.4L611.9 426.6L609.7 426.5L607.4 426.7ZM614.8 428.2L616.5 426.9L619.0 426.0L618.2 426.8L616.5 427.7L615.4 428.3ZM619.4 414.0L619.9 414.9L620.7 414.7L620.1 415.8L620.5 417.1L619.7 416.4L619.5 415.3ZM617.6 420.0L619.0 420.3L620.1 419.7L622.8 419.9L623.1 420.7L620.5 420.4L618.2 420.7ZM643.1 422.8L645.0 422.1L646.7 421.2L647.6 421.3L647.1 422.7L645.6 423.5L643.9 423.4ZM565.2 405.2L566.6 406.7L567.4 408.4L566.6 409.3L565.4 409.5L565.0 408.4L565.0 406.7Z" fill="#e9e9e9" fill-opacity="0.45"/><path d="M524.7 253.2L527.6 251.1L531.0 251.1L533.3 253.9L531.0 256.6L527.0 255.9ZM534.4 255.3L537.3 255.9L539.5 253.9L542.4 253.9L545.2 251.8L548.1 250.4L545.8 246.6L541.8 244.3L537.8 248.1L535.6 250.4Z" fill="#e9e9e9" fill-opacity="0.25"/><path d="M507.1 364.8L509.9 364.8L512.2 363.5L514.1 363.5L515.4 364.6L517.3 365.1L519.3 365.1L521.4 364.2L521.3 362.8L520.7 362.0L519.3 361.1L517.9 360.0L517.1 359.3L515.7 358.3L516.8 357.9L517.5 356.7L518.5 355.2L516.8 355.5L514.2 356.7L513.7 357.4L514.5 358.3L514.4 358.8L513.0 359.6L512.2 359.5L511.1 358.2L512.3 357.0L510.5 356.5L509.0 356.4L507.9 358.3L506.7 360.1L505.8 361.7L505.4 362.8L505.9 363.7ZM530.4 370.2L531.6 370.7L533.3 371.4L535.6 371.1L535.4 369.5L534.6 367.6L534.4 366.6L535.0 365.4L534.4 364.3L534.0 363.5L533.3 362.3L532.4 361.1L531.3 359.6L532.5 358.3L534.4 356.4L533.5 355.5L532.1 355.5L529.9 356.4L528.7 357.2L527.6 358.8L527.6 360.4L528.1 362.0L529.1 363.5L529.9 364.6L531.5 366.0L530.5 366.3L530.1 367.3L529.7 368.5L529.7 368.9ZM503.9 366.6L504.4 365.8L505.4 365.1L507.1 364.9L507.6 365.5L506.8 366.0L505.1 366.0L504.3 366.3Z" fill="#cacaca"/><path d="M369.1 356.0L371.4 354.2L373.1 353.0L375.4 352.7L377.3 354.5L377.6 356.4L375.4 356.4L373.7 355.7L371.4 356.2ZM373.9 363.5L375.6 363.5L375.7 360.4L377.1 357.7L376.0 357.4L373.9 359.6ZM377.7 357.2L380.5 356.9L382.8 358.8L382.2 359.6L380.9 359.6L380.1 361.8L378.8 360.6L379.0 358.5ZM592.2 347.7L593.5 347.9L595.4 346.2L597.7 343.9L599.3 341.0L599.1 339.4L597.9 341.6L596.0 344.5L593.9 346.4ZM540.7 360.4L542.4 360.9L543.5 359.6L544.1 357.2L543.0 356.0L541.3 356.9L540.5 358.5ZM510.3 417.0L512.2 416.1L513.1 417.0L512.5 419.0L510.5 419.3ZM378.9 364.0L381.1 364.3L383.9 362.5L383.4 362.0L380.5 363.1ZM383.1 361.5L386.2 361.5L387.0 360.4L385.1 360.4L383.4 360.9ZM361.4 349.7L364.0 349.5L363.4 346.8L362.3 343.4L361.1 343.9L361.9 346.8ZM332.1 317.5L336.1 318.0L339.5 315.3L338.3 312.4L334.9 313.0L332.6 314.7ZM340.8 328.1L344.0 328.1L347.5 324.9L349.2 323.7L346.9 323.2L343.5 325.2L341.2 326.6ZM508.4 330.4L511.1 330.2L511.6 328.1L509.9 326.4L508.2 327.8Z" fill="#cacaca" fill-opacity="0.45"/></g></defs>
<g clip-path="url(#mc)"><rect x="242" y="218" width="464" height="334" fill="#cacaca"/>
<use href="#world" x="-410.40"/><use href="#world"/><use href="#world" x="410.40"/>
<text transform="translate(348.20 346.60) scale(0.9648 1)" font-size="14.3" fill="#525268" stroke="#e9e9e9" stroke-opacity="0.75" stroke-width="2.2" stroke-linejoin="round" paint-order="stroke">NORTH</text>
<text transform="translate(341.20 361.30) scale(0.9411 1)" font-size="14.3" fill="#525268" stroke="#e9e9e9" stroke-opacity="0.75" stroke-width="2.2" stroke-linejoin="round" paint-order="stroke">AMERICA</text>
<text transform="translate(492.57 355.30) scale(0.8153 1)" font-size="14.3" fill="#525268" stroke="#e9e9e9" stroke-opacity="0.75" stroke-width="2.2" stroke-linejoin="round" paint-order="stroke">EUROPE</text>
<text transform="translate(585.90 347.70) scale(0.9119 1)" font-size="14.3" fill="#525268" stroke="#e9e9e9" stroke-opacity="0.75" stroke-width="2.2" stroke-linejoin="round" paint-order="stroke">ASIA</text>
<text transform="translate(491.00 416.30) scale(0.9140 1)" font-size="14.3" fill="#525268" stroke="#e9e9e9" stroke-opacity="0.75" stroke-width="2.2" stroke-linejoin="round" paint-order="stroke">AFRICA</text>
<text transform="translate(404.07 438.20) scale(0.9780 1)" font-size="14.3" fill="#525268" stroke="#e9e9e9" stroke-opacity="0.75" stroke-width="2.2" stroke-linejoin="round" paint-order="stroke">SOUTH</text>
<text transform="translate(396.90 453.40) scale(0.9426 1)" font-size="14.3" fill="#525268" stroke="#e9e9e9" stroke-opacity="0.75" stroke-width="2.2" stroke-linejoin="round" paint-order="stroke">AMERICA</text>
<text transform="translate(615.40 449.40) scale(0.9190 1)" font-size="14.3" fill="#525268" stroke="#e9e9e9" stroke-opacity="0.75" stroke-width="2.2" stroke-linejoin="round" paint-order="stroke">AUSTRALIA</text>
<text transform="translate(518.00 551.60) scale(0.9527 1)" font-size="14.2" fill="#525268" stroke="#e9e9e9" stroke-opacity="0.75" stroke-width="2.2" stroke-linejoin="round" paint-order="stroke">ANTARCTICA</text>
<text transform="translate(279.10 259.00) scale(0.9414 1)" font-size="10" fill="#858585" stroke="#e9e9e9" stroke-opacity="0.75" stroke-width="1.2" stroke-linejoin="round" paint-order="stroke">Arctic</text>
<text transform="translate(277.88 268.70) scale(0.9304 1)" font-size="10" fill="#858585" stroke="#e9e9e9" stroke-opacity="0.75" stroke-width="1.2" stroke-linejoin="round" paint-order="stroke">Ocean</text>
<text transform="translate(418.30 381.80) scale(1.0015 1)" font-size="10" fill="#858585" stroke="#e9e9e9" stroke-opacity="0.75" stroke-width="1.2" stroke-linejoin="round" paint-order="stroke">Atlantic</text>
<text transform="translate(422.57 392.20) scale(0.9515 1)" font-size="10" fill="#858585" stroke="#e9e9e9" stroke-opacity="0.75" stroke-width="1.2" stroke-linejoin="round" paint-order="stroke">Ocean</text>
<text transform="translate(555.88 444.00) scale(1.0195 1)" font-size="10" fill="#858585" stroke="#e9e9e9" stroke-opacity="0.75" stroke-width="1.2" stroke-linejoin="round" paint-order="stroke">Indian</text>
<text transform="translate(556.38 453.10) scale(0.9410 1)" font-size="10" fill="#858585" stroke="#e9e9e9" stroke-opacity="0.75" stroke-width="1.2" stroke-linejoin="round" paint-order="stroke">Ocean</text>
<circle cx="470.6" cy="343.2" r="11.5" fill="#123E10" fill-opacity="0.6" stroke="#0c240b" stroke-opacity="1" stroke-width="0.9"/>
<circle cx="464.5" cy="344.5" r="3.5" fill="#123E10" fill-opacity="0.6" stroke="#0c240b" stroke-opacity="1" stroke-width="0.9"/>
<circle cx="480" cy="345.2" r="3.5" fill="#123E10" fill-opacity="0.6" stroke="#0c240b" stroke-opacity="1" stroke-width="0.9"/>
<circle cx="478.8" cy="348.8" r="3.5" fill="#123E10" fill-opacity="0.6" stroke="#0c240b" stroke-opacity="1" stroke-width="0.9"/>
<circle cx="452.8" cy="318.3" r="3.5" fill="#123E10" fill-opacity="0.6" stroke="#0c240b" stroke-opacity="1" stroke-width="0.9"/>
<circle cx="484.8" cy="325.7" r="3.5" fill="#123E10" fill-opacity="0.6" stroke="#0c240b" stroke-opacity="1" stroke-width="0.9"/>
<circle cx="492.8" cy="323.9" r="3.5" fill="#123E10" fill-opacity="0.6" stroke="#0c240b" stroke-opacity="1" stroke-width="0.9"/>
<circle cx="503.8" cy="319.6" r="3.5" fill="#123E10" fill-opacity="0.6" stroke="#0c240b" stroke-opacity="1" stroke-width="0.9"/>
<circle cx="484.8" cy="339.2" r="3.5" fill="#123E10" fill-opacity="0.6" stroke="#0c240b" stroke-opacity="1" stroke-width="0.9"/>
<circle cx="501" cy="340.4" r="3.5" fill="#123E10" fill-opacity="0.6" stroke="#0c240b" stroke-opacity="1" stroke-width="0.9"/>
<circle cx="496.1" cy="346.9" r="3.5" fill="#123E10" fill-opacity="0.6" stroke="#0c240b" stroke-opacity="1" stroke-width="0.9"/>
<circle cx="486.3" cy="348.6" r="3.5" fill="#123E10" fill-opacity="0.6" stroke="#0c240b" stroke-opacity="1" stroke-width="0.9"/>
<circle cx="490.2" cy="353.6" r="3.5" fill="#123E10" fill-opacity="0.6" stroke="#0c240b" stroke-opacity="1" stroke-width="0.9"/>
<circle cx="489.5" cy="355.6" r="3.5" fill="#123E10" fill-opacity="0.6" stroke="#0c240b" stroke-opacity="1" stroke-width="0.9"/>
<circle cx="483.3" cy="356.1" r="3.5" fill="#123E10" fill-opacity="0.6" stroke="#0c240b" stroke-opacity="1" stroke-width="0.9"/>
<circle cx="476.3" cy="356.4" r="3.5" fill="#123E10" fill-opacity="0.6" stroke="#0c240b" stroke-opacity="1" stroke-width="0.9"/>
<circle cx="487.9" cy="361.8" r="3.5" fill="#123E10" fill-opacity="0.6" stroke="#0c240b" stroke-opacity="1" stroke-width="0.9"/>
<circle cx="464.5" cy="367" r="3.5" fill="#123E10" fill-opacity="0.6" stroke="#0c240b" stroke-opacity="1" stroke-width="0.9"/>
<circle cx="469.9" cy="366.2" r="3.5" fill="#123E10" fill-opacity="0.6" stroke="#0c240b" stroke-opacity="1" stroke-width="0.9"/>
<circle cx="490.3" cy="372.5" r="3.5" fill="#123E10" fill-opacity="0.6" stroke="#0c240b" stroke-opacity="1" stroke-width="0.9"/>
<circle cx="501.1" cy="369" r="3.5" fill="#123E10" fill-opacity="0.6" stroke="#0c240b" stroke-opacity="1" stroke-width="0.9"/>
<circle cx="511.5" cy="374" r="3.5" fill="#123E10" fill-opacity="0.6" stroke="#0c240b" stroke-opacity="1" stroke-width="0.9"/>
<circle cx="515" cy="375.3" r="3.5" fill="#123E10" fill-opacity="0.6" stroke="#0c240b" stroke-opacity="1" stroke-width="0.9"/>
<circle cx="513.7" cy="379.9" r="3.5" fill="#123E10" fill-opacity="0.6" stroke="#0c240b" stroke-opacity="1" stroke-width="0.9"/>
<circle cx="524.4" cy="388.2" r="3.5" fill="#123E10" fill-opacity="0.6" stroke="#0c240b" stroke-opacity="1" stroke-width="0.9"/>
<circle cx="531.3" cy="385.6" r="3.5" fill="#123E10" fill-opacity="0.6" stroke="#0c240b" stroke-opacity="1" stroke-width="0.9"/>
<circle cx="535.8" cy="388.5" r="3.5" fill="#123E10" fill-opacity="0.6" stroke="#0c240b" stroke-opacity="1" stroke-width="0.9"/>
<circle cx="363.8" cy="324.3" r="3.5" fill="#123E10" fill-opacity="0.6" stroke="#0c240b" stroke-opacity="1" stroke-width="0.9"/>
<circle cx="361.3" cy="367.4" r="3.5" fill="#123E10" fill-opacity="0.6" stroke="#0c240b" stroke-opacity="1" stroke-width="0.9"/>
<circle cx="413.3" cy="427.9" r="3.5" fill="#123E10" fill-opacity="0.6" stroke="#0c240b" stroke-opacity="1" stroke-width="0.9"/>
<circle cx="502.6" cy="450.9" r="3.5" fill="#123E10" fill-opacity="0.6" stroke="#0c240b" stroke-opacity="1" stroke-width="0.9"/>
<circle cx="628.8" cy="373.6" r="3.5" fill="#123E10" fill-opacity="0.6" stroke="#0c240b" stroke-opacity="1" stroke-width="0.9"/>
<circle cx="591.8" cy="414.8" r="3.5" fill="#123E10" fill-opacity="0.6" stroke="#0c240b" stroke-opacity="1" stroke-width="0.9"/>
<circle cx="626.9" cy="446.7" r="3.5" fill="#123E10" fill-opacity="0.6" stroke="#0c240b" stroke-opacity="1" stroke-width="0.9"/>
<rect x="245.9" y="536" width="3.9" height="3.9" fill="#f25022"/><rect x="250.2" y="536" width="3.9" height="3.9" fill="#7fba00"/><rect x="245.9" y="540.3" width="3.9" height="3.9" fill="#00a4ef"/><rect x="250.2" y="540.3" width="3.9" height="3.9" fill="#ffb900"/>
<text transform="translate(255.47 543.00) scale(0.8904 1)" font-size="7.4" fill="#666">Microsoft Bing</text>
<text transform="translate(447.39 545.20) scale(0.9485 1)" font-size="7.6" fill="#3a3a3a">© 2022 TomTom, © 2023 Microsoft Corporation,</text>
<text transform="translate(602.89 545.20) scale(0.9437 1)" font-size="7.6" fill="#5c70b0" text-decoration="underline">© OpenStreetMap</text>
<text transform="translate(666.35 545.20) scale(0.9619 1)" font-size="7.6" fill="#5c70b0" text-decoration="underline">Terms</text>
</g>
<text transform="translate(781.35 210.90) scale(1.0327 1)" font-size="13.4" font-weight="700" fill="#252423">Customer Type Distribution</text>
<circle cx="828.5" cy="283.3" r="38.95" fill="none" stroke="#123E10" stroke-width="19.1"/>
<path d="M828.5 234.8A48.5 48.5 0 0 0 807.44 239.61L815.73 256.82A29.4 29.4 0 0 1 828.5 253.9Z" fill="#000"/>
<path d="M807.6 229.8H817.3V234.8" fill="none" stroke="#c8c8c8" stroke-width="1"/>
<path d="M839.5 331L841.3 336.2H849.8" fill="none" stroke="#c8c8c8" stroke-width="1"/>
<text transform="translate(747.03 234.00) scale(0.9256 1)" font-size="9.6" fill="#605E5C">1.43K (7.15%)</text>
<text transform="translate(853.93 339.90) scale(0.9372 1)" font-size="9.6" fill="#605E5C">18.53K (92.8...)</text>
<text transform="translate(928.98 267.00) scale(0.9601 1)" font-size="11" font-weight="700" fill="#605E5C">CustomerType</text>
<circle cx="934.3" cy="280.4" r="3.8" fill="#123E10"/><circle cx="934.3" cy="301" r="3.8" fill="#000"/>
<text transform="translate(939.73 283.90) scale(1.0299 1)" font-size="10.6" fill="#605E5C">Member</text>
<text transform="translate(939.73 304.60) scale(1.0300 1)" font-size="10.6" fill="#605E5C">Normal</text>
<text transform="translate(781.91 395.50) scale(1.1058 1)" font-size="13.4" font-weight="700" fill="#252423">Quantity Sold by Country</text>
<path d="M808 410V528" stroke="#d8d8d8" stroke-width="1" stroke-dasharray="1 3" fill="none"/>
<path d="M860.7 410V528" stroke="#d8d8d8" stroke-width="1" stroke-dasharray="1 3" fill="none"/>
<path d="M913.3 410V528" stroke="#d8d8d8" stroke-width="1" stroke-dasharray="1 3" fill="none"/>
<path d="M966.2 410V528" stroke="#d8d8d8" stroke-width="1" stroke-dasharray="1 3" fill="none"/>
<rect x="808" y="417.90" width="175.1" height="12.4" fill="#123E10"/>
<text transform="translate(737.46 428.00) scale(1.0021 1)" font-size="9.8" fill="#605E5C">United Kingd...</text>
<rect x="808" y="436.26" width="139.4" height="12.4" fill="#123E10"/>
<text transform="translate(748.92 446.36) scale(0.9919 1)" font-size="9.8" fill="#605E5C">Netherlands</text>
<rect x="808" y="454.62" width="135.9" height="12.4" fill="#123E10"/>
<text transform="translate(771.31 464.72) scale(1.0116 1)" font-size="9.8" fill="#605E5C">Ireland</text>
<rect x="808" y="472.98" width="133.2" height="12.4" fill="#123E10"/>
<text transform="translate(762.23 483.08) scale(0.9620 1)" font-size="9.8" fill="#605E5C">Germany</text>
<rect x="808" y="491.34" width="132.8" height="12.4" fill="#123E10"/>
<text transform="translate(772.46 501.44) scale(0.9495 1)" font-size="9.8" fill="#605E5C">France</text>
<rect x="808" y="509.70" width="129.4" height="12.4" fill="#123E10"/>
<text transform="translate(764.40 519.80) scale(0.9595 1)" font-size="9.8" fill="#605E5C">Australia</text>
<text transform="translate(807.35 541.90) scale(0.6262 1)" font-size="9.6" fill="#605E5C">1</text>
<text transform="translate(854.91 541.90) scale(0.8240 1)" font-size="9.6" fill="#605E5C">100</text>
<text transform="translate(902.18 541.90) scale(0.8591 1)" font-size="9.6" fill="#605E5C">10000</text>
<text transform="translate(950.08 541.90) scale(0.8625 1)" font-size="9.6" fill="#605E5C">1000000</text>
<rect x="1009" y="410.7" width="6" height="120.5" fill="#f3f3f3"/><rect x="1009" y="410.7" width="6" height="17.7" fill="#c3c3c3"/>
</svg></body></html>
